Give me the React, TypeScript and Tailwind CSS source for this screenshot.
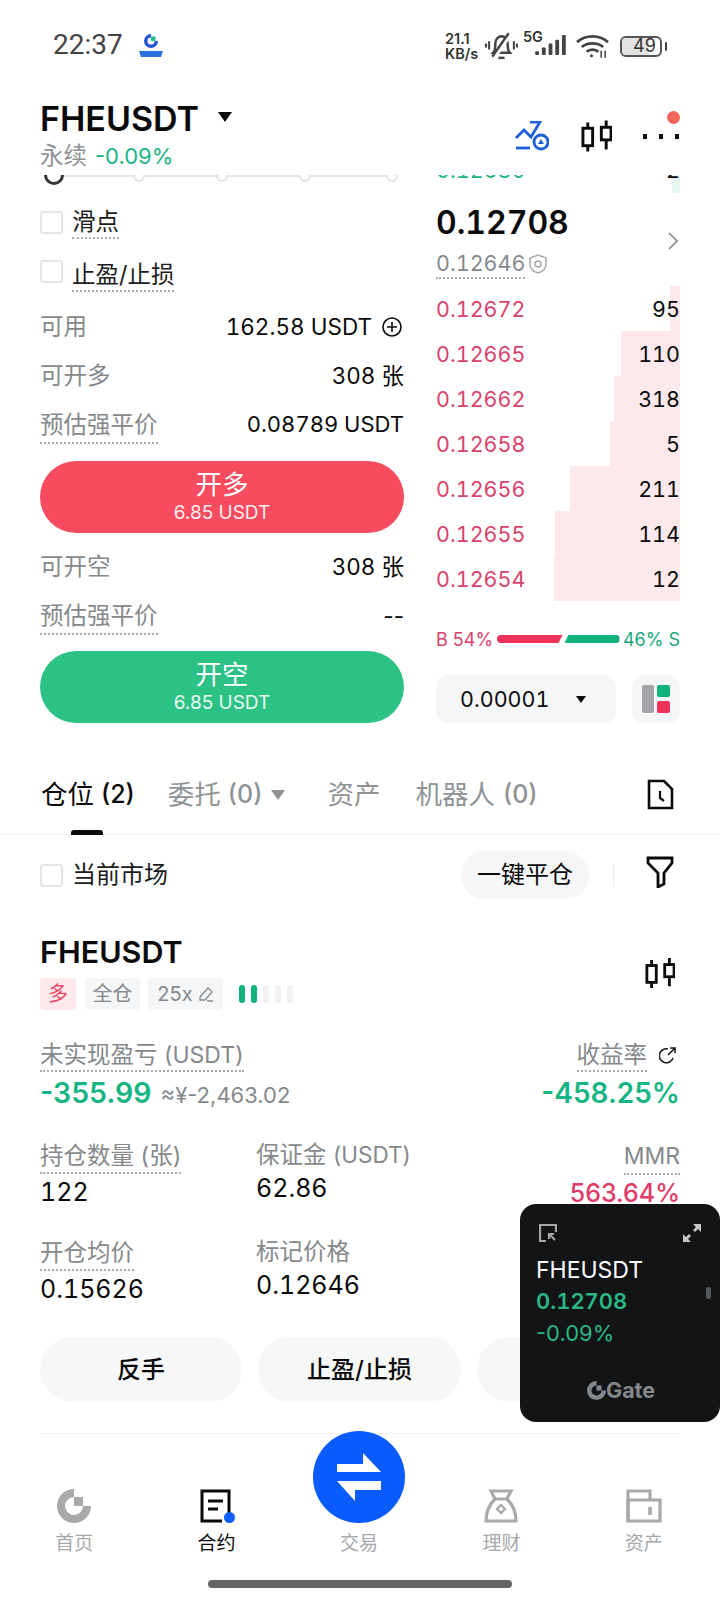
import type { ReactNode } from 'react';

const asks = [
  { price: '0.12672', qty: '95', bar: 10 },
  { price: '0.12665', qty: '110', bar: 59 },
  { price: '0.12662', qty: '318', bar: 66 },
  { price: '0.12658', qty: '5', bar: 70 },
  { price: '0.12656', qty: '211', bar: 110 },
  { price: '0.12655', qty: '114', bar: 125 },
  { price: '0.12654', qty: '12', bar: 126 },
];

function Dotted({ children, className = '' }: { children: ReactNode; className?: string }) {
  return (
    <span className={`inline-block border-b-2 border-dotted border-[#a9adb0] whitespace-nowrap ${className}`}>
      {children}
    </span>
  );
}

function Box({ className = '' }: { className?: string }) {
  return <div className={`w-[23px] h-[23px] rounded-[3px] border-2 border-[#e4e5e6] bg-white shrink-0 ${className}`} />;
}

function InfoRow({ label, value, dotted }: { label: string; value: ReactNode; dotted?: boolean }) {
  return (
    <div className="h-[49px] flex items-center justify-between">
      {dotted ? (
        <Dotted className="text-[23.5px] leading-[34px] text-[#85898c] mt-[2px]">{label}</Dotted>
      ) : (
        <span className="text-[23.5px] text-[#85898c]">{label}</span>
      )}
      <span className="text-[22.5px] tabular-nums text-[#0a0a0a] flex items-center whitespace-nowrap">{value}</span>
    </div>
  );
}

function TradeButton({ title, className }: { title: string; className: string }) {
  return (
    <div className={`h-[72px] rounded-full flex flex-col items-center text-white ${className}`}>
      <span className="text-[26.5px] leading-[36px] mt-[5px]">{title}</span>
      <span className="text-[19px] leading-[24px] opacity-90 mt-[-1px]">6.85 USDT</span>
    </div>
  );
}

function Candles({ className = '' }: { className?: string }) {
  return (
    <svg viewBox="0 0 32 32" className={className} fill="none" stroke="#0a0a0a" strokeWidth="3">
      <path d="M7 2v6M7 26v6M26 0v7M26 20v10" />
      <rect x="2" y="8" width="10" height="18" />
      <rect x="21" y="7" width="10" height="13" />
    </svg>
  );
}

function StatusIcons() {
  return (
    <div className="flex items-center">
      <div className="w-[31px] text-[14.5px] leading-[15px] font-semibold text-[#333] flex flex-col whitespace-nowrap">
        <span>21.1</span>
        <span>KB/s</span>
      </div>
      <svg viewBox="0 0 32 27" className="w-[33px] h-[28px] ml-[9px]" fill="none" stroke="#444" strokeWidth="2.4">
        <path d="M8 20c2-2 2-5 2-9 0-4 3-7 6-7s6 3 6 7c0 4 0 7 2 9Z" />
        <path d="M13 25h6" />
        <path d="M9 24 25 1" stroke="#fff" strokeWidth="4.5" />
        <path d="M7 24 23 1" />
        <path d="M4 9v8M1 11v4M28 9v8M31 11v4" strokeWidth="2" />
      </svg>
      <div className="relative w-[43px] h-[26px] ml-[5px]">
        <span className="absolute left-0 top-[-3px] text-[14.5px] leading-[14px] font-semibold text-[#333]">5G</span>
        <svg viewBox="0 0 32 22" className="absolute left-[12px] top-[2px] w-[31px] h-[21px]" fill="#444">
          <rect x="0" y="17" width="4" height="4" rx="1" />
          <rect x="7" y="13" width="4" height="8" rx="1" />
          <rect x="14" y="9" width="4" height="12" rx="1" />
          <rect x="21" y="5" width="4" height="16" rx="1" />
          <rect x="28" y="0" width="4" height="21" rx="1" />
        </svg>
      </div>
      <svg viewBox="0 0 34 24" className="w-[33px] h-[24px] ml-[10px]" fill="none" stroke="#444" strokeWidth="2.8">
        <path d="M1 8c9-8 23-8 32 0M6 13c6-5 16-5 22 0M11 18c3-3 9-3 12 0" />
        <circle cx="16" cy="22" r="1.6" fill="#444" stroke="none" />
        <path d="M26 17v7M30 17v7" strokeWidth="1.6" />
      </svg>
      <div className="ml-[11px] w-[42px] h-[21px] rounded-[6px] border-2 border-[#555] flex items-center overflow-hidden">
        <div className="h-full w-[27px] bg-[#e3e3e3] flex items-center">
          <span className="text-[18px] leading-none text-[#333] ml-[11px]">49</span>
        </div>
      </div>
      <div className="w-[2px] h-[9px] bg-[#444] ml-[3px] rounded-full" />
    </div>
  );
}

function GateMark({ className = '', fill = '#a9a9a9' }: { className?: string; fill?: string }) {
  return (
    <svg viewBox="0 0 34 34" className={className} fill={fill}>
      <path d="M17 0v8a9 9 0 1 0 9 9h8A17 17 0 1 1 17 0Z" />
      <rect x="17" y="8" width="9" height="9" />
    </svg>
  );
}

function Stat({
  label,
  value,
  dotted,
  valueClass = 'text-[#0a0a0a] tabular-nums',
  right,
}: {
  label: ReactNode;
  value: string;
  dotted?: boolean;
  valueClass?: string;
  right?: boolean;
}) {
  return (
    <div className={`flex flex-col ${right ? 'items-end' : 'items-start'}`}>
      {dotted ? (
        <Dotted className="text-[23.5px] leading-[33px] text-[#85898c]">{label}</Dotted>
      ) : (
        <span className="text-[23.5px] leading-[31px] text-[#85898c] whitespace-nowrap">{label}</span>
      )}
      <span className={`text-[25px] leading-[36px] ${valueClass}`}>{value}</span>
    </div>
  );
}

function NavItem({ label, icon, active }: { label: string; icon: ReactNode; active?: boolean }) {
  return (
    <div className="flex flex-col items-center justify-end">
      <div className="h-[34px] flex items-center justify-center">{icon}</div>
      <span className={`text-[19px] leading-[24px] mt-[9px] ${active ? 'text-[#0a0a0a]' : 'text-[#a6a8aa]'}`}>{label}</span>
    </div>
  );
}

export default function App() {
  return (
    <div className="relative w-[720px] h-[1600px] overflow-hidden bg-white font-[Inter,'Noto_Sans_CJK_SC',sans-serif]">
      {/* status bar */}
      <div className="h-[92px] pl-[53px] pr-[53px] pt-[31px] flex justify-between items-start">
        <div className="flex items-center h-[28px]">
          <span className="text-[28px] leading-[28px] text-[#444] font-['Roboto',sans-serif]">22:37</span>
          <svg viewBox="0 0 26 26" className="w-[26px] h-[26px] ml-[15px]">
            <path d="M13 2a7 7 0 1 0 7 7h-3.5a3.5 3.5 0 1 1-3.5-3.5Z" fill="#2456d6" />
            <rect x="13" y="4.5" width="4.5" height="4.5" fill="#22c08a" />
            <path d="M1 19h24l-2 6H3Z" fill="#2a6fe0" />
          </svg>
        </div>
        <StatusIcons />
      </div>

      {/* pair header */}
      <div className="relative z-10 h-[83px] bg-white px-[40px] flex justify-between items-start">
        <div>
          <div className="flex items-center h-[54px]">
            <span className="text-[34px] font-semibold leading-[54px] text-[#0a0a0a]">FHEUSDT</span>
            <svg viewBox="0 0 14 10" className="w-[14px] h-[10px] ml-[19px] mt-[-4px]" fill="#0a0a0a">
              <path d="M0 0h14L7 10Z" />
            </svg>
          </div>
          <div className="flex items-center text-[23.5px] leading-[28px] mt-[-4px]">
            <span className="text-[#8f9396]">永续</span>
            <span className="text-[22px] text-[#19b585] ml-[8px]">-0.09%</span>
          </div>
        </div>
        <div className="flex items-center h-[32px] mt-[28px]">
          <svg viewBox="0 0 34 30" className="w-[34px] h-[30px]" fill="none" stroke="#1d5fd8" strokeWidth="2.8">
            <path d="M1 17 9 9l7 7L25 1H15" />
            <path d="M1 27h14" />
            <circle cx="26" cy="21" r="7" />
            <path d="M26 18l3 5h-6Z" fill="#1d5fd8" stroke="none" />
          </svg>
          <Candles className="w-[31px] h-[32px] ml-[32px]" />
          <div className="relative flex items-center gap-[12px] ml-[31px] w-[37px]">
            <div className="w-[4px] h-[5px] bg-[#0a0a0a]" />
            <div className="w-[4px] h-[5px] bg-[#0a0a0a]" />
            <div className="w-[4px] h-[5px] bg-[#0a0a0a]" />
            <div className="absolute right-0 top-[-23px] w-[13px] h-[13px] rounded-full bg-[#f2665a]" />
          </div>
        </div>
      </div>

      {/* order form and book */}
      <div className="h-[548px] px-[40px] flex gap-[32px]">
        <div className="w-[364px]">
          <div className="relative h-[32px]">
            <div className="absolute left-[6px] right-[6px] top-0 h-[2px] bg-[#e8e9ea]" />
            <div className="absolute left-[4px] top-[-10px] w-[20px] h-[20px] rounded-full border-[3px] border-[#333] bg-white" />
            <div className="absolute left-[93px] top-[-5px] w-[12px] h-[12px] rounded-full border-2 border-[#e2e3e4] bg-white" />
            <div className="absolute left-[176px] top-[-5px] w-[12px] h-[12px] rounded-full border-2 border-[#e2e3e4] bg-white" />
            <div className="absolute left-[259px] top-[-5px] w-[12px] h-[12px] rounded-full border-2 border-[#e2e3e4] bg-white" />
            <div className="absolute left-[346px] top-[-5px] w-[12px] h-[12px] rounded-full border-2 border-[#e2e3e4] bg-white" />
          </div>
          <div className="flex items-start gap-[9px]">
            <Box className="mt-[4px]" />
            <Dotted className="text-[23.5px] leading-[30px] text-[#1c1c1c]">滑点</Dotted>
          </div>
          <div className="flex items-start gap-[9px] mt-[21px]">
            <Box />
            <Dotted className="text-[23.5px] leading-[30px] text-[#1c1c1c]">止盈/止损</Dotted>
          </div>

          <div className="mt-[10px]">
            <InfoRow
              label="可用"
              value={
                <>
                  162.58 USDT
                  <svg viewBox="0 0 20 20" className="w-[20px] h-[20px] ml-[10px] mr-[2px]" fill="none" stroke="#0a0a0a" strokeWidth="1.6">
                    <circle cx="10" cy="10" r="9" />
                    <path d="M10 5v10M5 10h10" />
                  </svg>
                </>
              }
            />
            <InfoRow label="可开多" value="308 张" />
            <InfoRow label="预估强平价" value={<span className="text-[22px]">0.08789 USDT</span>} dotted />
          </div>
          <TradeButton title="开多" className="bg-[#f74b60] mt-[12px]" />
          <div className="mt-[9px]">
            <InfoRow label="可开空" value="308 张" />
            <InfoRow label="预估强平价" value={<span className="normal-nums">--</span>} dotted />
          </div>
          <TradeButton title="开空" className="bg-[#2dc285] mt-[11px]" />
        </div>

        <div className="w-[244px]">
          <div className="relative h-[45px] mt-[-27px] flex items-center justify-between text-[21.5px] tabular-nums">
            <div className="absolute right-0 bottom-0 w-[8px] h-[18px] bg-[#e6f6f0]" />
            <span className="relative text-[#19b585]">0.12680</span>
            <span className="relative text-[#0a0a0a]">2</span>
          </div>
          <div className="flex items-center justify-between mt-[10px]">
            <div className="flex flex-col items-start">
              <span className="text-[32px] leading-[40px] font-semibold tabular-nums text-[#0a0a0a]">0.12708</span>
              <div className="flex items-center mt-[6px]">
                <Dotted className="text-[21.5px] leading-[28px] tabular-nums text-[#85898c]">0.12646</Dotted>
                <svg viewBox="0 0 18 20" className="w-[18px] h-[20px] ml-[4px]" fill="none" stroke="#a9adb0" strokeWidth="1.6">
                  <path d="M9 1l8 3v6c0 5-4 8-8 9-4-1-8-4-8-9V4Z" />
                  <circle cx="9" cy="10" r="3" />
                </svg>
              </div>
            </div>
            <svg viewBox="0 0 10 18" className="w-[10px] h-[18px] mr-[2px]" fill="none" stroke="#85898c" strokeWidth="1.6">
              <path d="M1 1l8 8-8 8" />
            </svg>
          </div>

          <div className="mt-[7px]">
            {asks.map((row) => (
              <div key={row.price} className="relative h-[45px] pt-[2px] flex items-center justify-between text-[21.5px] tabular-nums">
                <div className="absolute right-0 inset-y-0 bg-[#fde9ec]" style={{ width: row.bar }} />
                <span className="relative text-[#d9426b]">{row.price}</span>
                <span className="relative text-[#0a0a0a]">{row.qty}</span>
              </div>
            ))}
          </div>

          <div className="h-[24px] mt-[26px] flex items-center justify-between text-[18px] whitespace-nowrap">
            <span className="text-[#d9426b]">B 54%</span>
            <div className="flex items-center gap-[2px]">
              <div className="w-[66px] h-[8px] bg-[#f0315a] rounded-l-full [clip-path:polygon(0_0,100%_0,94%_100%,0_100%)]" />
              <div className="w-[55px] h-[8px] bg-[#10b27c] rounded-r-full [clip-path:polygon(7%_0,100%_0,100%_100%,0_100%)]" />
            </div>
            <span className="text-[#19a77d]">46% S</span>
          </div>

          <div className="flex justify-between mt-[24px]">
            <div className="w-[180px] h-[48px] rounded-[12px] bg-[#f5f6f7] flex items-center pl-[24px]">
              <span className="text-[21.5px] tabular-nums text-[#0a0a0a]">0.00001</span>
              <svg viewBox="0 0 10 7" className="w-[10px] h-[7px] ml-[27px]" fill="#0a0a0a">
                <path d="M0 0h10L5 7Z" />
              </svg>
            </div>
            <div className="w-[48px] h-[48px] rounded-[12px] bg-[#f5f6f7] flex items-center justify-center">
              <div className="flex gap-[3px] h-[28px]">
                <div className="w-[12px] bg-[#a1a3a6] rounded-[2px]" />
                <div className="w-[13px] flex flex-col gap-[4px]">
                  <div className="h-[12px] bg-[#10b27c] rounded-[2px]" />
                  <div className="h-[12px] bg-[#f0315a] rounded-[2px]" />
                </div>
              </div>
            </div>
          </div>
        </div>
      </div>

      {/* tabs */}
      <div className="relative h-[75px] mt-[37px] pl-[41px] pr-[46px] pb-[5px] border-b border-[#f2f3f3] flex items-center text-[26.5px] text-[#8f9396] whitespace-nowrap">
        <div className="text-[#0a0a0a] flex items-center gap-[7px]">
          仓位<span className="text-[25px] font-medium">(2)</span>
          <div className="absolute left-[71px] bottom-[-1px] w-[32px] h-[5px] rounded-t-[3px] bg-[#0a0a0a]" />
        </div>
        <div className="ml-[33px] flex items-center gap-[7px]">
          委托<span className="text-[25px] font-medium">(0)</span>
          <svg viewBox="0 0 14 10" className="w-[14px] h-[10px] ml-[2px]" fill="#8f9396">
            <path d="M0 0h14L7 10Z" />
          </svg>
        </div>
        <span className="ml-[42px]">资产</span>
        <div className="ml-[35px] flex items-center gap-[8px]">
          机器人<span className="text-[25px] font-medium">(0)</span>
        </div>
        <svg viewBox="0 0 27 31" className="w-[27px] h-[31px] ml-auto" fill="none" stroke="#0a0a0a" strokeWidth="2.6">
          <path d="M2 2h15l8 8v19H2Z" />
          <path d="M13 12v7l4 3" strokeWidth="2.2" />
        </svg>
      </div>

      {/* positions */}
      <div className="px-[40px]">
        <div className="h-[48px] mt-[16px] flex items-center">
          <Box />
          <span className="text-[24px] text-[#1c1c1c] ml-[9px]">当前市场</span>
          <div className="ml-auto w-[128px] h-[48px] rounded-full bg-[#f5f6f7] flex items-center justify-center text-[24px] text-[#0a0a0a]">
            一键平仓
          </div>
          <div className="w-px h-[23px] bg-[#e8e9ea] ml-[24px]" />
          <svg viewBox="0 0 28 32" className="w-[28px] h-[32px] ml-[32px] mt-[-6px] mr-[6px]" fill="none" stroke="#0a0a0a" strokeWidth="2.8">
            <path d="M2 2h24v5l-8 10v11l-6 3V17L2 7Z" />
          </svg>
        </div>

        <div className="flex justify-between mt-[35px]">
          <div>
            <div className="text-[30.5px] leading-[36px] font-semibold text-[#0a0a0a]">FHEUSDT</div>
            <div className="flex items-center mt-[8px] h-[32px] text-[20px] text-[#85898c]">
              <div className="w-[36px] h-[32px] rounded-[4px] bg-[#fde9ec] text-[#ea4468] flex items-center justify-center">多</div>
              <div className="w-[55px] h-[32px] rounded-[4px] bg-[#f5f6f7] flex items-center justify-center ml-[9px]">全仓</div>
              <div className="w-[75px] h-[32px] rounded-[4px] bg-[#f5f6f7] flex items-center justify-center ml-[8px]">
                25x
                <svg viewBox="0 0 16 16" className="w-[16px] h-[16px] ml-[5px]" fill="none" stroke="#85898c" strokeWidth="1.3">
                  <path d="M2 11 10 2l4 4-7 8M2 11v3h5M9 15h6" />
                </svg>
              </div>
              <div className="flex gap-[6px] ml-[16px]">
                <div className="w-[6px] h-[18px] rounded-full bg-[#10b27c]" />
                <div className="w-[6px] h-[18px] rounded-full bg-[#10b27c]" />
                <div className="w-[6px] h-[18px] rounded-full bg-[#f1f2f3]" />
                <div className="w-[6px] h-[18px] rounded-full bg-[#f1f2f3]" />
                <div className="w-[6px] h-[18px] rounded-full bg-[#f1f2f3]" />
              </div>
            </div>
          </div>
          <Candles className="w-[30px] h-[32px] mt-[23px] mr-[5px]" />
        </div>

        <div className="flex justify-between mt-[30px]">
          <div className="flex flex-col items-start">
            <Dotted className="text-[23.5px] leading-[30px] text-[#85898c]">
              未实现盈亏 <span className="text-[23px]">(USDT)</span>
            </Dotted>
            <div className="flex items-baseline mt-[3px] leading-[36px]">
              <span className="text-[28.5px] font-semibold text-[#17b583]">-355.99</span>
              <span className="text-[22px] text-[#85898c] ml-[9px]">≈¥-2,463.02</span>
            </div>
          </div>
          <div className="flex flex-col items-end">
            <div className="flex items-start">
              <Dotted className="text-[23.5px] leading-[30px] text-[#85898c]">收益率</Dotted>
              <svg viewBox="0 0 18 18" className="w-[18px] h-[18px] ml-[12px] mt-[6px] mr-[3px]" fill="none" stroke="#1c1c1c" strokeWidth="1.6">
                <path d="M14 12a7 7 0 1 1-5-9M9 9l7-7M11 2h5v5" />
              </svg>
            </div>
            <span className="text-[28px] leading-[36px] font-semibold text-[#17b583] mt-[3px]">-458.25%</span>
          </div>
        </div>

        <div className="grid grid-cols-[216px_1fr_auto] gap-y-[25px] mt-[26px]">
          <Stat label={<>持仓数量 <span className="text-[23.5px]">(张)</span></>} value="122" dotted />
          <Stat label={<>保证金 <span className="text-[22.5px]">(USDT)</span></>} value="62.86" />
          <Stat label={<span className="text-[23px]">MMR</span>} value="563.64%" dotted right valueClass="text-[#df3a68] font-medium" />
          <Stat label="开仓均价" value="0.15626" dotted />
          <Stat label="标记价格" value="0.12646" />
        </div>

        <div className="flex gap-[16px] mt-[30px] text-[24px] font-medium text-[#0a0a0a] whitespace-nowrap">
          <div className="w-[202px] h-[65px] shrink-0 rounded-full bg-[#f6f7f7] flex items-center justify-center">反手</div>
          <div className="w-[203px] h-[65px] shrink-0 rounded-full bg-[#f6f7f7] flex items-center justify-center">止盈/止损</div>
          <div className="w-[203px] h-[65px] shrink-0 rounded-full bg-[#f6f7f7]" />
        </div>
        <div className="h-px bg-[#f2f3f3] mt-[31px]" />
      </div>

      {/* bottom nav */}
      <div className="grid grid-cols-5 pl-[3px] pr-[5px] h-[125px] mt-[-3px]">
        <NavItem label="首页" icon={<GateMark className="w-[34px] h-[34px]" />} />
        <NavItem
          active
          label="合约"
          icon={
            <div className="relative w-[34px] h-[34px]">
              <svg viewBox="0 0 34 34" className="w-[34px] h-[34px]" fill="none" stroke="#0a0a0a" strokeWidth="3">
                <path d="M29 24V2H2v30h20" />
                <path d="M8 12h15M8 20h10" />
              </svg>
              <div className="absolute right-[-1px] bottom-[0px] w-[11px] h-[11px] rounded-full bg-[#0f5fff]" />
            </div>
          }
        />
        <div className="flex flex-col items-center">
          <div className="w-[92px] h-[92px] rounded-full bg-[#0a5cff] flex items-center justify-center">
            <svg viewBox="0 0 44 48" className="w-[44px] h-[48px]" fill="#fff">
              <path d="M0 11h26V0l18 19H0Z" />
              <path d="M44 28v9H18v11L0 28Z" />
            </svg>
          </div>
          <span className="text-[19px] leading-[24px] mt-[9px] text-[#a6a8aa]">交易</span>
        </div>
        <NavItem
          label="理财"
          icon={
            <svg viewBox="0 0 34 34" className="w-[34px] h-[34px]" fill="none" stroke="#a9a9a9" strokeWidth="3.2">
              <path d="M7 2h20l-4 8H11Z" />
              <path d="M11 10C6 15 2 21 2 32h30c0-11-4-17-9-22" />
              <path d="M17 16l4 4-4 4-4-4Z" strokeWidth="2.4" />
            </svg>
          }
        />
        <NavItem
          label="资产"
          icon={
            <svg viewBox="0 0 36 34" className="w-[36px] h-[34px]" fill="none" stroke="#a9a9a9" strokeWidth="3.2">
              <path d="M2 32V2h22v9" />
              <path d="M2 11h32v21H2Z" />
              <path d="M24 18v8" strokeWidth="3.6" />
            </svg>
          }
        />
      </div>

      <div className="w-[304px] h-[8px] rounded-full bg-[#666] mx-auto mt-[24px]" />

      {/* floating price window */}
      <div className="absolute right-0 top-[1204px] w-[200px] h-[218px] rounded-[16px] bg-[#121416]">
        <div className="flex justify-between pl-[19px] pr-[19px] pt-[20px]">
          <svg viewBox="0 0 18 18" className="w-[18px] h-[18px]" fill="none" stroke="#a4a6a8" strokeWidth="2.2">
            <path d="M7 17H1V1h16v7" />
            <path d="M16 16 10 10M10 15v-5h5" />
          </svg>
          <svg viewBox="0 0 18 18" className="w-[18px] h-[18px]" fill="#c4c6c8">
            <path d="M18 0v8l-3-3-3 3-2-2 3-3-3-3ZM0 18v-8l3 3 3-3 2 2-3 3 3 3Z" />
          </svg>
        </div>
        <div className="pl-[16px] mt-[12px] flex flex-col">
          <span className="text-[23px] leading-[32px] text-white">FHEUSDT</span>
          <span className="text-[22px] leading-[28px] font-semibold tabular-nums text-[#2cb684] mt-[1px]">0.12708</span>
          <span className="text-[22px] leading-[32px] text-[#2cb684] mt-[2px]">-0.09%</span>
        </div>
        <div className="absolute right-[9px] top-[83px] w-[5px] h-[12px] rounded-full bg-[#55585a]" />
        <div className="absolute left-[67px] bottom-[20px] flex items-center">
          <GateMark className="w-[19px] h-[19px]" fill="#85888a" />
          <span className="text-[21.5px] leading-[24px] font-bold text-[#85888a]">Gate</span>
        </div>
      </div>
    </div>
  );
}
